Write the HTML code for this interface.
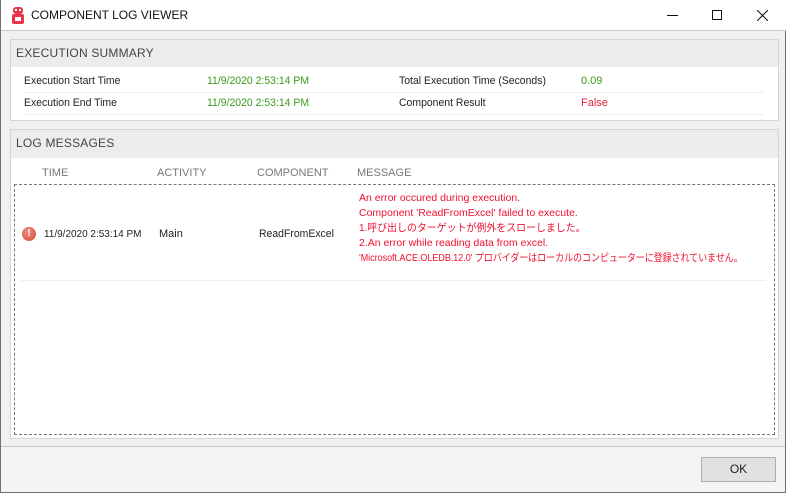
<!DOCTYPE html>
<html><head><meta charset="utf-8"><style>
*{box-sizing:border-box;margin:0;padding:0}
body{width:786px;height:493px;overflow:hidden;font-family:"Segoe UI","Liberation Sans","Noto Sans CJK JP",sans-serif;font-size:11px;color:#222;background:#f0f0f0;position:relative}
.win{position:absolute;left:0;top:0;width:786px;height:493px;border:1px solid #707070;border-top:none;background:#f0f0f0}
.title{position:absolute;left:0;top:0;width:786px;height:31px;background:#fff;border-bottom:1px solid #c8c8c8}
.title .t{position:absolute;left:30px;top:8px;font-size:12px;color:#111}
.panel{position:absolute;left:9px;width:769px;border:1px solid #d5d5d5;background:#fff}
.ph{height:27px;background:#ececec;font-size:12px;color:#444;padding:6px 0 0 5px;letter-spacing:.2px}
.abs{position:absolute;white-space:nowrap}
.g{color:#3a9a1a}.r{color:#e8203a}
.hd{color:#777;font-size:11px}
.msg{color:#f01030;font-size:10.5px;line-height:15px;transform-origin:0 0}
.sx{transform:scaleX(0.95);transform-origin:0 0}
</style></head><body>
<div class="win">
<div class="title">
<svg class="abs" style="left:10px;top:7px" width="14" height="17" viewBox="0 0 14 17"><rect x="2" y="0" width="10" height="7" rx="3" fill="#e8344a"/><rect x="4" y="2" width="2" height="2" fill="#fff"/><rect x="8" y="2" width="2" height="2" fill="#fff"/><rect x="1" y="7" width="12" height="10" rx="2" fill="#e8344a"/><rect x="4" y="10" width="6" height="4" fill="#fff"/></svg>
<div class="t">COMPONENT LOG VIEWER</div>
<div class="abs" style="left:666px;top:15px;width:11px;height:1px;background:#111"></div>
<div class="abs" style="left:711px;top:10px;width:10px;height:10px;border:1px solid #111"></div>
<svg class="abs" style="left:756px;top:10px" width="11" height="11"><path d="M0 0L11 11M11 0L0 11" stroke="#111" stroke-width="1"/></svg>
</div>
<div class="panel" style="top:39px;height:82px">
<div class="ph">EXECUTION SUMMARY</div>
<div class="abs sx" style="left:13px;top:35px">Execution Start Time</div>
<div class="abs g sx" style="left:196px;top:35px">11/9/2020 2:53:14 PM</div>
<div class="abs sx" style="left:388px;top:35px">Total Execution Time (Seconds)</div>
<div class="abs g" style="left:570px;top:35px">0.09</div>
<div class="abs sx" style="left:13px;top:57px">Execution End Time</div>
<div class="abs g sx" style="left:196px;top:57px">11/9/2020 2:53:14 PM</div>
<div class="abs sx" style="left:388px;top:57px">Component Result</div>
<div class="abs r" style="left:570px;top:57px">False</div>
<div class="abs" style="left:13px;top:52px;width:740px;height:1px;background:#eee"></div>
<div class="abs" style="left:13px;top:74px;width:740px;height:1px;background:#eee"></div>
</div>
<div class="panel" style="top:129px;height:310px">
<div class="ph" style="height:28px">LOG MESSAGES</div>
<div class="abs hd" style="left:31px;top:37px">TIME</div>
<div class="abs hd" style="left:146px;top:37px">ACTIVITY</div>
<div class="abs hd" style="left:246px;top:37px">COMPONENT</div>
<div class="abs hd" style="left:346px;top:37px">MESSAGE</div>
<div class="abs" style="left:3px;top:54px;width:761px;height:251px;border:1px dashed #777"></div>
<div class="abs" style="left:11px;top:97px;width:14px;height:14px;border-radius:50%;background:radial-gradient(circle at 40% 35%,#f08a80,#d64a3e);color:#fff;font-weight:bold;font-size:10px;text-align:center;line-height:14px">!</div>
<div class="abs sx" style="left:33px;top:98px;font-size:10.5px">11/9/2020 2:53:14 PM</div>
<div class="abs" style="left:148px;top:98px">Main</div>
<div class="abs sx" style="left:248px;top:98px">ReadFromExcel</div>
<div class="abs msg" style="left:348px;top:61px">An error occured during execution.</div>
<div class="abs msg" style="left:348px;top:76px">Component 'ReadFromExcel' failed to execute.</div>
<div class="abs msg" style="left:348px;top:91px;transform:scaleX(0.945)">1.呼び出しのターゲットが例外をスローしました。</div>
<div class="abs msg" style="left:348px;top:106px">2.An error while reading data from excel.</div>
<div class="abs msg" style="left:348px;top:121px;transform:scaleX(0.853)">'Microsoft.ACE.OLEDB.12.0' プロバイダーはローカルのコンピューターに登録されていません。</div>
<div class="abs" style="left:10px;top:150px;width:745px;height:1px;background:#eee"></div>
</div>
<div class="abs" style="left:0;top:446px;width:784px;height:46px;background:#f4f4f4;border-top:1px solid #c8c8c8"></div>
<div class="abs" style="left:700px;top:457px;width:75px;height:25px;border:1px solid #adadad;background:#e1e1e1;text-align:center;line-height:23px;font-size:12px">OK</div>
</div>
</body></html>
